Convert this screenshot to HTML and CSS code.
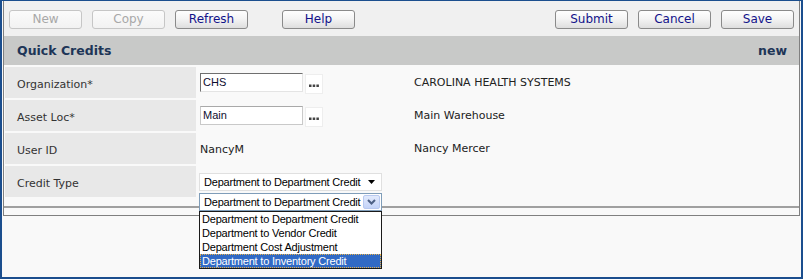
FILE: index.html
```
<!DOCTYPE html>
<html>
<head>
<meta charset="utf-8">
<link rel="stylesheet" href="styles.css">
</head>
<body>
<div class="frame">
  <div class="panel">
    <div class="toolbar">
      <div class="btn-group">
        <button class="btn" disabled>New</button>
        <button class="btn" disabled>Copy</button>
        <button class="btn">Refresh</button>
        <button class="btn btn-help">Help</button>
      </div>
      <div class="btn-group">
        <button class="btn">Submit</button>
        <button class="btn">Cancel</button>
        <button class="btn">Save</button>
      </div>
    </div>
    <div class="header"><span>Quick Credits</span><span>new</span></div>
    <div class="rows">
      <div class="row">
        <div class="label">Organization*</div>
        <div class="value">
          <div class="field field-focus">CHS</div>
          <div class="lookup"><svg width="10" height="3" viewBox="0 0 10 3"><rect x="0" y="0.5" width="2.5" height="2.5" fill="#444"/><rect x="3.7" y="0.5" width="2.5" height="2.5" fill="#444"/><rect x="7.4" y="0.5" width="2.5" height="2.5" fill="#444"/></svg></div>
        </div>
        <div class="desc">CAROLINA HEALTH SYSTEMS</div>
      </div>
      <div class="row">
        <div class="label">Asset Loc*</div>
        <div class="value">
          <div class="field">Main</div>
          <div class="lookup"><svg width="10" height="3" viewBox="0 0 10 3"><rect x="0" y="0.5" width="2.5" height="2.5" fill="#444"/><rect x="3.7" y="0.5" width="2.5" height="2.5" fill="#444"/><rect x="7.4" y="0.5" width="2.5" height="2.5" fill="#444"/></svg></div>
        </div>
        <div class="desc">Main Warehouse</div>
      </div>
      <div class="row">
        <div class="label">User ID</div>
        <div class="value value-text">NancyM</div>
        <div class="desc">Nancy Mercer</div>
      </div>
      <div class="row">
        <div class="label">Credit Type</div>
        <div class="value value-select">
          <div class="select">
            <span>Department to Department Credit</span>
            <svg class="tri" width="7" height="4" viewBox="0 0 7 4"><polygon points="0,0 7,0 3.5,4" fill="#000"/></svg>
          </div>
          <div class="popup">
            <div class="select select-open">
              <span>Department to Department Credit</span>
              <span class="drop-btn"><svg width="9" height="6" viewBox="0 0 9 6"><polyline points="1,1 4.5,4.5 8,1" fill="none" stroke="#4d6185" stroke-width="2"/></svg></span>
            </div>
            <div class="list">
              <div class="item">Department to Department Credit</div>
              <div class="item">Department to Vendor Credit</div>
              <div class="item">Department Cost Adjustment</div>
              <div class="item item-active">Department to Inventory Credit</div>
            </div>
          </div>
        </div>
        <div class="desc"></div>
      </div>
    </div>
    <div class="rule"></div>
  </div>
</div>
</body>
</html>
```

FILE: styles.css
```
html, body {
  margin: 0;
  padding: 0;
}
body {
  width: 803px;
  height: 279px;
  overflow: hidden;
  background: #f9f9f9;
  font-family: "DejaVu Sans", Verdana, sans-serif;
}
.frame {
  box-sizing: border-box;
  width: 803px;
  height: 279px;
  border: 2px solid #1b4e8e;
  border-top-width: 1px;
  background: #f9f9f9;
  padding: 0 1px;
}
.panel {
  border: 1px solid #808080;
  border-top: none;
  background: #f9f9f9;
}
.toolbar {
  box-sizing: border-box;
  height: 35px;
  background: #f0f0f0;
  padding: 9px 5px 0 5px;
  display: flex;
  justify-content: space-between;
  align-items: flex-start;
}
.btn-group {
  display: flex;
  gap: 10px;
}
.btn {
  box-sizing: border-box;
  width: 73px;
  height: 19px;
  padding: 0;
  margin: 0;
  border: 1px solid #8a8a8a;
  border-radius: 3px;
  background: linear-gradient(#fefefe, #f4f4f4 45%, #dedede);
  font-family: "DejaVu Sans", Verdana, sans-serif;
  font-size: 12px;
  line-height: 17px;
  color: #12128a;
}
.btn:disabled {
  border-color: #c6c6c6;
  background: linear-gradient(#fbfbfb, #f2f2f2);
  color: #a8a8a8;
}
.btn-help {
  margin-left: 24px;
}
.header {
  height: 29px;
  background: #c8c9c8;
  display: flex;
  align-items: center;
  justify-content: space-between;
  padding: 0 12px 0 13px;
  font-weight: bold;
  font-size: 12.5px;
  color: #1d3557;
}
.rows {
  padding: 2px 1px 0 1px;
  display: flex;
  flex-direction: column;
  gap: 2px;
}
.row {
  display: grid;
  grid-template-columns: 191px 218px 1fr;
  height: 31px;
  font-size: 11px;
}
.label {
  background: #e8e8e8;
  padding-left: 12px;
  display: flex;
  align-items: center;
  color: #333;
  padding-top: 3px;
}
.value {
  display: flex;
  align-items: center;
  padding-left: 4px;
  color: #222;
}
.value-text {
  padding-top: 2px;
}
.desc {
  display: flex;
  align-items: center;
  color: #222;
}
.field {
  box-sizing: border-box;
  width: 103px;
  height: 19px;
  background: #fff;
  border: 1px solid #c9c9c9;
  border-top-color: #a9a9a9;
  padding-left: 2px;
  font-family: "Liberation Sans", Arial, sans-serif;
  font-size: 11px;
  line-height: 17px;
  color: #0d0d30;
}
.field-focus {
  border-color: #e4e4e4;
  border-top-color: #6f6f6f;
  border-left-color: #6f6f6f;
}
.lookup {
  box-sizing: border-box;
  width: 18px;
  height: 20px;
  margin-left: 2px;
  margin-top: 3px;
  background: #fff;
  border: 1px solid #eeeeee;
  display: flex;
  justify-content: center;
  align-items: flex-end;
  padding-bottom: 6px;
}
.lookup svg {
  display: block;
}
.value-select {
  position: relative;
  padding-left: 3px;
}
.select {
  box-sizing: border-box;
  width: 183px;
  height: 18px;
  background: #fff;
  border: 1px solid #e0e0e0;
  display: flex;
  align-items: center;
  justify-content: space-between;
  padding-left: 4px;
  padding-right: 6px;
  font-family: "Liberation Sans", Arial, sans-serif;
  font-size: 11px;
  letter-spacing: -0.2px;
  color: #000;
}
.tri {
  display: block;
}
.popup {
  position: absolute;
  left: 3px;
  top: 27px;
  width: 183px;
}
.select-open {
  border-color: #7f9db9;
  padding-right: 1px;
}
.drop-btn {
  box-sizing: border-box;
  width: 17px;
  height: 14px;
  border: 1px solid #b8c9f0;
  border-radius: 2px;
  background: linear-gradient(#e2eafc, #c3d3f8);
  display: flex;
  align-items: center;
  justify-content: center;
}
.drop-btn svg {
  display: block;
}
.list {
  box-sizing: border-box;
  width: 183px;
  border: 1px solid #1a1a1a;
  background: #fff;
  font-family: "Liberation Sans", Arial, sans-serif;
  font-size: 11px;
  letter-spacing: -0.2px;
  color: #000;
}
.item {
  height: 14px;
  line-height: 14px;
  padding-left: 2px;
  white-space: nowrap;
}
.item-active {
  box-sizing: border-box;
  background: #316ac5;
  color: #fff;
  outline: 1px dotted #e7b14a;
  outline-offset: -1px;
  padding-left: 2px;
}
.rule {
  margin-top: 9px;
  height: 9px;
  border-top: 2px solid #a0a0a0;
  box-sizing: border-box;
}
```
